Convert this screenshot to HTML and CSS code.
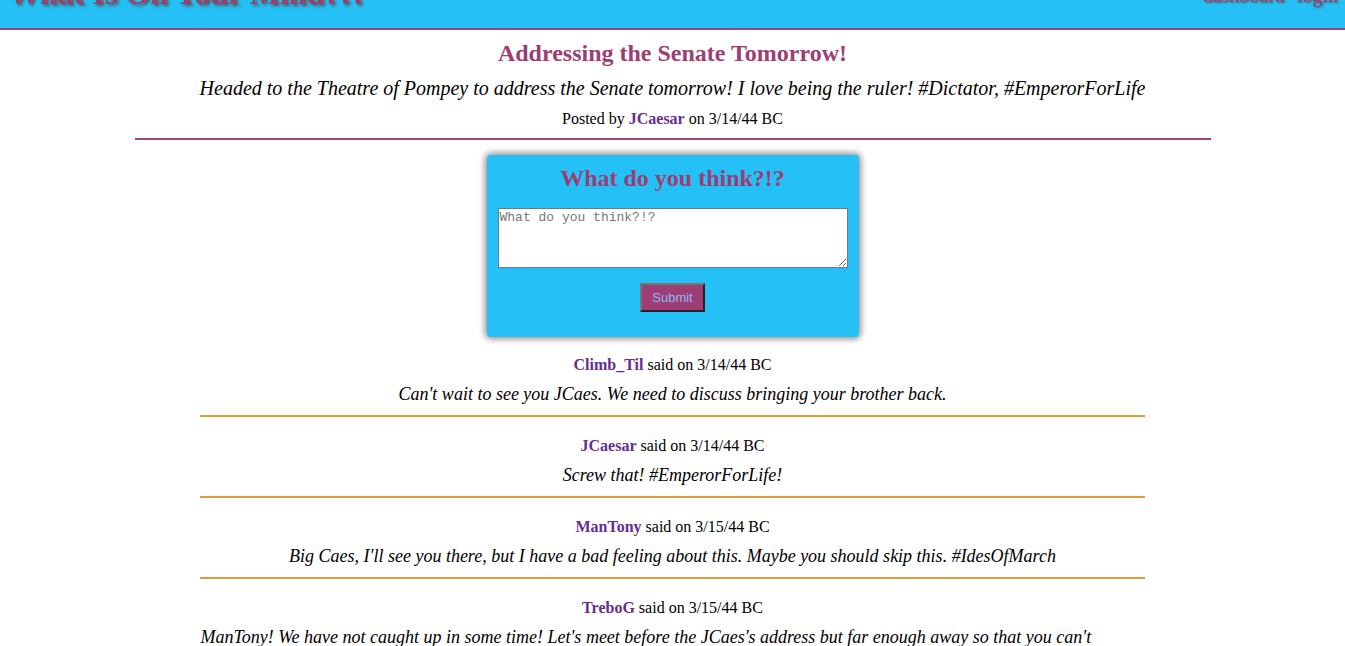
FILE: index.html
```html
<!DOCTYPE html>
<html>
<head>
<meta charset="utf-8">
<link rel="stylesheet" href="styles.css">
</head>
<body>
<header class="topbar">
  <h1 class="brand">What Is On Your Mind?!?</h1>
  <nav class="nav">
    <a class="nav-link">dashboard</a>
    <a class="nav-link">login</a>
  </nav>
</header>
<main class="page">
  <section class="post">
    <h2 class="post-title">Addressing the Senate Tomorrow!</h2>
    <p class="post-body">Headed to the Theatre of Pompey to address the Senate tomorrow! I love being the ruler! #Dictator, #EmperorForLife</p>
    <p class="post-meta">Posted by <b class="user">JCaesar</b> on 3/14/44 BC</p>
  </section>
  <form class="comment-form">
    <h2 class="form-title">What do you think?!?</h2>
    <textarea class="form-input" placeholder="What do you think?!?"></textarea>
    <button type="button" class="form-submit">Submit</button>
  </form>
  <section class="comments">
    <article class="comment">
      <p class="comment-meta"><b class="user">Climb_Til</b> said on 3/14/44 BC</p>
      <p class="comment-body">Can't wait to see you JCaes. We need to discuss bringing your brother back.</p>
    </article>
    <article class="comment">
      <p class="comment-meta"><b class="user">JCaesar</b> said on 3/14/44 BC</p>
      <p class="comment-body">Screw that! #EmperorForLife!</p>
    </article>
    <article class="comment">
      <p class="comment-meta"><b class="user">ManTony</b> said on 3/15/44 BC</p>
      <p class="comment-body">Big Caes, I'll see you there, but I have a bad feeling about this. Maybe you should skip this. #IdesOfMarch</p>
    </article>
    <article class="comment">
      <p class="comment-meta"><b class="user">TreboG</b> said on 3/15/44 BC</p>
      <p class="comment-body">ManTony! We have not caught up in some time! Let's meet before the JCaes's address but far enough away so that you can't overhear the Senate. I have much to tell you about my travels.</p>
    </article>
  </section>
</main>
</body>
</html>
```
FILE: styles.css
```css
html, body {
  margin: 0;
  padding: 0;
  background: #ffffff;
  font-family: "Liberation Serif", "Times New Roman", serif;
  color: #000;
}
.topbar {
  display: flex;
  justify-content: space-between;
  align-items: flex-start;
  height: 28px;
  background: #25c1f6;
  border-bottom: 2px solid #9b4679;
  overflow: hidden;
}
.brand {
  margin: -25px 0 0 8px;
  font-size: 32px;
  font-weight: bold;
  line-height: 37px;
  color: #9e3d74;
  text-shadow: 2px 2px 3px #555;
}
.nav {
  display: flex;
  gap: 12px;
  margin: -16px 7px 0 0;
  line-height: 23px;
}
.nav-link {
  font-size: 20px;
  color: #9e3d74;
  text-shadow: 1px 1px 2px #555;
}
.page {
  display: flex;
  flex-direction: column;
  align-items: center;
}
.post {
  width: 80%;
  text-align: center;
  border-bottom: 2px solid #9b4679;
  padding-bottom: 10px;
}
.post-title {
  margin: 9px 0 0;
  font-size: 24px;
  line-height: 28px;
  color: #9e3d74;
}
.post-body {
  margin: 10px 0 0;
  font-size: 20px;
  font-style: italic;
  line-height: 23px;
}
.post-meta {
  margin: 10px 0 0;
  font-size: 16px;
  line-height: 18px;
}
.user {
  color: #662d91;
}
.comment-form {
  display: flex;
  flex-direction: column;
  align-items: center;
  width: 372px;
  box-sizing: border-box;
  margin-top: 15px;
  padding: 9px 11px 25px;
  background: #25c1f6;
  border-radius: 4px;
  box-shadow: 0 0 6px 2px rgba(0,0,0,0.45);
}
.form-title {
  margin: 0;
  font-size: 24px;
  line-height: 28px;
  color: #9e3d74;
}
.form-input {
  margin-top: 16px;
  width: 350px;
  height: 60px;
  box-sizing: border-box;
  padding: 1px;
  border: 1px solid #6b7a86;
  font-family: "Liberation Mono", "Courier New", monospace;
  font-size: 13px;
  resize: vertical;
  background: #fff;
}
.form-input::placeholder {
  color: #777;
}
.form-submit {
  margin-top: 15px;
  width: 65px;
  height: 29px;
  background: #9e3d74;
  color: #8db8f8;
  font-family: "Liberation Sans", Arial, sans-serif;
  font-size: 13px;
  border: 2px solid;
  border-color: #767676 #222 #222 #767676;
  padding: 0;
}
.comments {
  width: 70.2%;
  margin-top: 19px;
}
.comment {
  text-align: center;
  border-bottom: 2px solid #e59a3a;
  padding-bottom: 10px;
  margin-bottom: 20px;
}
.comment-meta {
  margin: 0;
  font-size: 16px;
  line-height: 18px;
}
.comment-body {
  display: inline-block;
  text-align: left;
  margin: 10px 0 0;
  font-size: 18px;
  font-style: italic;
  line-height: 21px;
}
```
